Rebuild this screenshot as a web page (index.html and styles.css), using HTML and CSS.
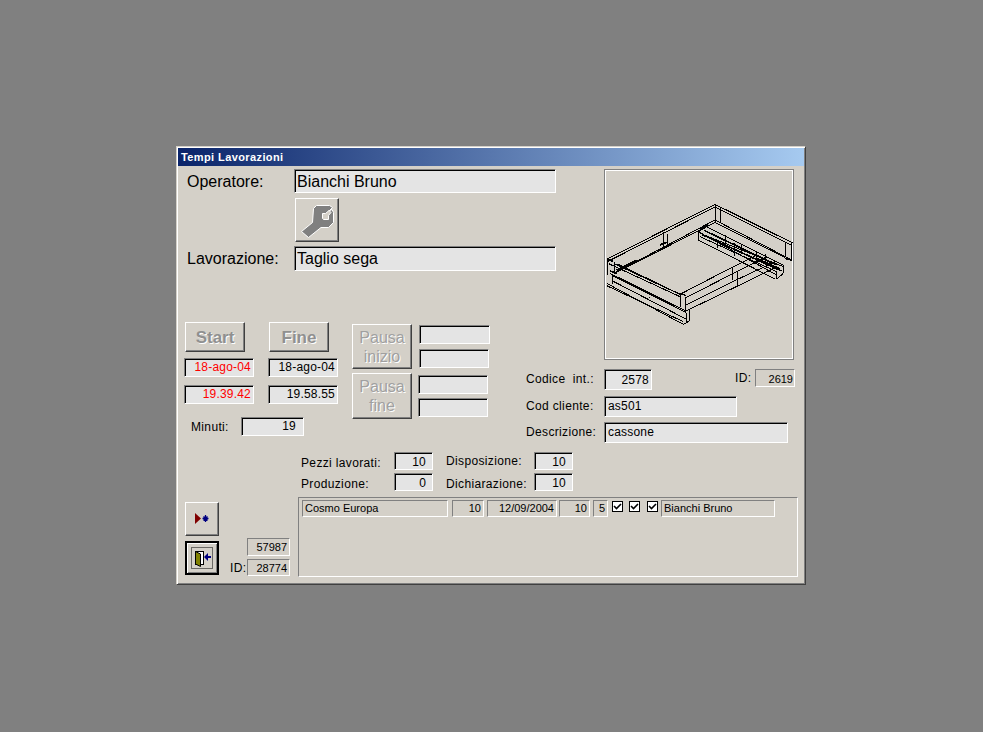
FILE: index.html
```html
<!DOCTYPE html>
<html lang="it">
<head>
<meta charset="utf-8">
<title>Tempi Lavorazioni</title>
<link rel="stylesheet" href="styles.css">
</head>
<body>
<main class="window">
  <header class="titlebar">Tempi Lavorazioni</header>
  <div class="content">
    <div class="upper">
      <section class="left">
        <div class="big-row">
          <span class="big-label op-label">Operatore:</span>
          <span class="field big-field op-field">Bianchi Bruno</span>
        </div>
        <button class="btn wrench" type="button" aria-label="Strumenti">
          <svg width="42" height="42" viewBox="1 1 42 42">
            <path class="wrench-fill" d="M18.500 10.500L21.500 7.500H34.500L37.500 9.500L34 13L37 11.500L38.500 14.500V24.500L33.500 29.500H26L13.500 39.500L6.500 33.500L17.500 24.500Z"/>
            <path class="wrench-hole" d="M27.500 15.500H30.500L34 12.500L36 14.500L33.500 17.500V21.500H28.500L27.500 20.500Z"/>
          </svg>
        </button>
        <div class="big-row lav-row">
          <span class="big-label">Lavorazione:</span>
          <span class="field big-field lav-field">Taglio sega</span>
        </div>
        <div class="timing">
          <div class="times">
            <div class="time-cols">
              <div class="time-col">
                <button class="btn action" type="button">Start</button>
                <span class="field time red first">18-ago-04</span>
                <span class="field time red second">19.39.42</span>
              </div>
              <div class="time-col">
                <button class="btn action" type="button">Fine</button>
                <span class="field time first">18-ago-04</span>
                <span class="field time second">19.58.55</span>
              </div>
            </div>
            <div class="minuti">
              <span class="label minuti-label">Minuti:</span>
              <span class="field minuti-field">19</span>
            </div>
          </div>
          <div class="pause-btns">
            <button class="btn pause" type="button">Pausa<br>inizio</button>
            <button class="btn pause pause-end" type="button">Pausa<br>fine</button>
          </div>
          <div class="pause-fields">
            <span class="field pf pf1"></span>
            <span class="field pf pf2"></span>
            <span class="field pf pf3"></span>
            <span class="field pf pf4"></span>
          </div>
        </div>
      </section>
      <figure class="picture">
        <svg class="drawing" width="188" height="189" viewBox="15 15 564 567">
          <path d="M22 282L345 118L578 234M22 290L345 126L575 241M345 118V170M360 125V172M575 234V285M555 230V275M22 282V330M42 292V325M42 325L345 165L575 285M50 322L345 172L555 278M190 200V250M203 208V240"/>
          <path d="M42 296L240 388M50 296L245 390M26 296L240 395M30 325L255 437M38 332L258 443M38 330V356M20 355L250 478M20 362L250 470M38 348L258 462M240 388V425M255 395V440M268 432V468M250 478L268 468M258 443V475M148 395V398"/>
          <path d="M240 388L400 305L470 270M258 398L400 325L500 276M258 420L415 342L530 288M258 438L415 362L530 306M398 308V345M412 320V366M240 384L258 392"/>
          <path d="M295 200L530 330M295 225L525 342M300 205L550 305M320 185L550 300M345 172L320 185L295 200M295 200V225M530 320V342M550 300V325M530 342L550 325M352 225V250M375 210V235M402 235V272M425 238V262M470 262V292M495 268V300M300 215L530 320"/>
          <path class="heavy" d="M305 208L545 318M312 196L530 300M50 316L110 285M30 318L50 324M470 280L540 312M180 240L200 232M300 190L325 178M22 282L40 290M555 280L575 285"/>
        </svg>
      </figure>
      <section class="codes">
        <div class="code-row">
          <span class="label code-label">Codice  int.:</span>
          <span class="field code-int">2578</span>
          <span class="label id-label">ID:</span>
          <span class="thin code-id">2619</span>
        </div>
        <div class="code-row">
          <span class="label code-label">Cod cliente:</span>
          <span class="field code-text client">as501</span>
        </div>
        <div class="code-row">
          <span class="label code-label">Descrizione:</span>
          <span class="field code-text desc">cassone</span>
        </div>
      </section>
    </div>
    <section class="counts">
      <span class="label low">Pezzi lavorati:</span>
      <span class="field count">10</span>
      <span class="label count-label">Disposizione:</span>
      <span class="field count">10</span>
      <span class="label low">Produzione:</span>
      <span class="field count">0</span>
      <span class="label count-label low">Dichiarazione:</span>
      <span class="field count">10</span>
    </section>
    <div class="bottom">
      <div class="nav-btns">
        <button class="btn nav" type="button" aria-label="Nuovo record">
          <svg width="32" height="32" viewBox="1 1 32 32">
            <path class="new-tri" d="M10 11V22L16 16.500Z"/>
            <path class="new-star" d="M20.500 13V20M17.500 16.500H23.500M18.500 14.500L22.500 18.500M22.500 14.500L18.500 18.500"/>
          </svg>
        </button>
        <button class="btn nav default" type="button" aria-label="Esci">
          <svg width="30" height="30" viewBox="2 2 30 30">
            <rect class="focus" x="6.500" y="6.500" width="21" height="21"/>
            <rect class="door-frame" x="10.500" y="10.500" width="8" height="13"/>
            <path class="door-leaf" d="M10.500 10.500L15.500 13V25.500L10.500 23Z"/>
            <path class="door-arrow" d="M19 16L23 12V15H26V17H23V20Z"/>
          </svg>
        </button>
      </div>
      <div class="ids">
        <span class="thin id-field">57987</span>
        <div class="id-row">
          <span class="label">ID:</span>
          <span class="thin id-field second-id">28774</span>
        </div>
      </div>
      <section class="list">
        <div class="list-row">
          <span class="thin cell c-name">Cosmo Europa</span>
          <span class="thin cell c-qty num">10</span>
          <span class="thin cell c-date num">12/09/2004</span>
          <span class="thin cell c-qty2 num">10</span>
          <span class="thin cell c-five num">5</span>
          <span class="check ck1"><svg width="9" height="9" viewBox="0 0 9 9"><path d="M1 4L3.500 6.500L8 2"/></svg></span>
          <span class="check ck2"><svg width="9" height="9" viewBox="0 0 9 9"><path d="M1 4L3.500 6.500L8 2"/></svg></span>
          <span class="check ck3"><svg width="9" height="9" viewBox="0 0 9 9"><path d="M1 4L3.500 6.500L8 2"/></svg></span>
          <span class="thin cell c-op">Bianchi Bruno</span>
        </div>
      </section>
    </div>
  </div>
</main>
</body>
</html>
```

FILE: styles.css
```css
* { box-sizing: border-box; }

html, body { height: 100%; }

body {
  margin: 0;
  padding: 146px 0 0 176px;
  background: #808080;
  font-family: "Liberation Sans", Arial, sans-serif;
  color: #000;
  overflow: hidden;
}

.window {
  width: 630px;
  height: 439px;
  background: #d4d0c8;
  border: 1px solid;
  border-color: #d4d0c8 #404040 #404040 #d4d0c8;
  box-shadow: inset 1px 1px 0 #fff, inset -1px -1px 0 #808080;
  padding: 1px;
}

.titlebar {
  height: 18px;
  line-height: 18px;
  padding-left: 3px;
  font-size: 11px;
  font-weight: bold;
  letter-spacing: 0.4px;
  color: #fff;
  background: linear-gradient(to right, #0a246a, #a6caf0);
}

.content { padding-top: 3px; }

.upper {
  display: grid;
  grid-template-columns: 342px 84px 200px;
  grid-template-rows: 200px 83px;
}

.left { grid-area: 1 / 1 / 3 / 3; }
.picture { grid-area: 1 / 3 / 2 / 4; }
.codes { grid-area: 2 / 2 / 3 / 4; padding-left: 6px; }

/* sunken text box */
.field {
  display: block;
  background: #e4e4e4;
  border: 1px solid;
  border-color: #808080 #fff #fff #808080;
  box-shadow: inset 1px 1px 0 #000;
  font-size: 12px;
  letter-spacing: 0.2px;
  white-space: nowrap;
  overflow: hidden;
}

/* thin flat read-only box */
.thin {
  display: block;
  background: #d4d0c8;
  border: 1px solid;
  border-color: #808080 #fff #fff #808080;
  font-size: 11px;
  white-space: nowrap;
  overflow: hidden;
}

.label {
  font-size: 12px;
  letter-spacing: 0.35px;
  white-space: pre;
}

.low { padding-top: 3px; }

.big-row {
  display: flex;
  align-items: center;
  padding-left: 9px;
}

.big-label {
  width: 107px;
  font-size: 16px;
}

.op-label { padding-top: 2px; }

.big-field {
  width: 262px;
  padding-left: 2px;
  font-size: 16px;
  letter-spacing: 0;
}

.op-field { height: 24px; line-height: 24px; }
.lav-field { height: 25px; line-height: 23px; }
.lav-row { margin-top: 4px; }

/* buttons */
.btn {
  display: block;
  padding: 0;
  background: #d4d0c8;
  border: 1px solid;
  border-color: #fff #404040 #404040 #fff;
  box-shadow: inset -1px -1px 0 #808080;
  font-family: inherit;
}

.btn svg { display: block; }

.wrench {
  width: 44px;
  height: 44px;
  margin: 5px 0 0 117px;
}

.wrench-fill { fill: #808080; stroke: #fff; stroke-width: 1; }
.wrench-hole { fill: #d4d0c8; stroke: #fff; stroke-width: 1; }

.timing {
  display: flex;
  align-items: flex-start;
  margin: 51px 0 0 6px;
}

.time-cols {
  display: flex;
  gap: 14px;
}

.time-col { width: 70px; }

.action {
  width: 60px;
  height: 30px;
  margin-left: 1px;
  padding-top: 2px;
  font-size: 17px;
  font-weight: bold;
  color: #909090;
  text-shadow: 1px 1px 0 #fff;
}

.time {
  height: 19px;
  line-height: 17px;
  padding-right: 2px;
  text-align: right;
}

.red { color: #ff0000; }
.first { margin-top: 6px; }
.second { margin-top: 8px; }

.minuti {
  display: flex;
  align-items: center;
  margin-top: 13px;
  padding-left: 7px;
}

.minuti-label { width: 50px; }

.minuti-field {
  width: 63px;
  height: 19px;
  line-height: 17px;
  padding-right: 7px;
  text-align: right;
}

.pause-btns {
  margin: 2px 0 0 14px;
}

.pause {
  width: 60px;
  height: 45px;
  font-size: 16px;
  line-height: 19px;
  color: #a0a0a0;
  text-shadow: 1px 1px 0 #fff;
}

.pause-end {
  height: 46px;
  margin-top: 4px;
}

.pause-fields {
  margin: 3px 0 0 7px;
}

.pf { width: 70px; height: 19px; }
.pf1 { width: 71px; }
.pf2 { margin-top: 5px; }
.pf3 { margin: 7px 0 0 -1px; }
.pf4 { margin: 4px 0 0 -1px; }

/* picture */
.picture {
  width: 190px;
  height: 191px;
  margin: 0;
  border: 1px solid #808080;
  box-shadow: inset 1px 1px 0 #fff, inset -1px -1px 0 #fff;
}

.drawing {
  display: block;
  fill: none;
  stroke: #000;
  stroke-width: 3;
  shape-rendering: crispEdges;
}

.heavy { stroke-width: 5; }

/* codes */
.code-row {
  display: flex;
  align-items: flex-start;
  height: 21px;
  margin-bottom: 5px;
}

.code-row:first-child { margin-bottom: 6px; }

.code-label { width: 78px; line-height: 21px; }

.code-int {
  width: 48px;
  height: 21px;
  line-height: 21px;
  padding-right: 2px;
  text-align: right;
}

.id-label {
  margin-left: 83px;
  width: 20px;
  line-height: 19px;
}

.code-id {
  width: 40px;
  height: 18px;
  line-height: 18px;
  padding-right: 1px;
  text-align: right;
}

.code-text {
  height: 21px;
  line-height: 19px;
  padding-left: 3px;
}

.client { width: 133px; }
.desc { width: 184px; }

/* counts */
.counts {
  display: grid;
  grid-template-columns: 93px 39px 101px 39px;
  grid-auto-rows: 18px;
  row-gap: 3px;
  margin-left: 123px;
  align-items: center;
}

.count {
  height: 18px;
  line-height: 18px;
  padding-right: 6px;
  text-align: right;
}

.count-label { padding-left: 13px; }

/* bottom */
.bottom {
  display: flex;
  align-items: flex-start;
  margin-top: 6px;
}

.nav-btns {
  margin: 5px 0 0 7px;
}

.nav {
  width: 34px;
  height: 34px;
}

.default {
  margin-top: 5px;
  border: 2px solid #000;
  box-shadow: inset 1px 1px 0 #fff, inset -1px -1px 0 #808080;
}

.new-tri { fill: #800000; }
.new-star { fill: none; stroke: #000080; stroke-width: 1.3; }

.focus {
  fill: none;
  stroke: #000;
  stroke-width: 1;
  stroke-dasharray: 1 1;
}

.door-frame { fill: #fff; stroke: #000; }
.door-leaf { fill: #808000; stroke: #000; }
.door-arrow { fill: #000080; }

.ids {
  width: 60px;
  margin: 41px 0 0 11px;
}

.id-field {
  width: 43px;
  height: 18px;
  line-height: 17px;
  margin-left: 17px;
  padding-right: 2px;
  text-align: right;
}

.id-row {
  display: flex;
  align-items: center;
  margin-top: 3px;
}

.second-id { margin-left: 0; height: 17px; line-height: 16px; }

.id-row .label { width: 17px; }

.list {
  width: 500px;
  height: 80px;
  margin-left: 8px;
  padding: 2px 0 0 3px;
  border: 1px solid;
  border-color: #808080 #fff #fff #808080;
}

.list-row {
  display: flex;
  align-items: flex-start;
}

.cell {
  height: 17px;
  line-height: 15px;
  padding: 0 2px;
}

.num { text-align: right; }

.c-name { width: 146px; }
.c-qty { width: 32px; margin-left: 4px; }
.c-date { width: 70px; margin-left: 3px; }
.c-qty2 { width: 31px; margin-left: 2px; }
.c-five { width: 15px; margin-left: 3px; }
.c-op { width: 114px; margin-left: 3px; }

.check {
  display: block;
  width: 11px;
  height: 11px;
  margin-top: 1px;
  background: #fff;
  border: 1px solid #000;
}

.check svg { display: block; }

.check path {
  fill: none;
  stroke: #000;
  stroke-width: 1.6;
}

.ck1 { margin-left: 4px; }
.ck2 { margin-left: 6px; }
.ck3 { margin-left: 7px; }
```
